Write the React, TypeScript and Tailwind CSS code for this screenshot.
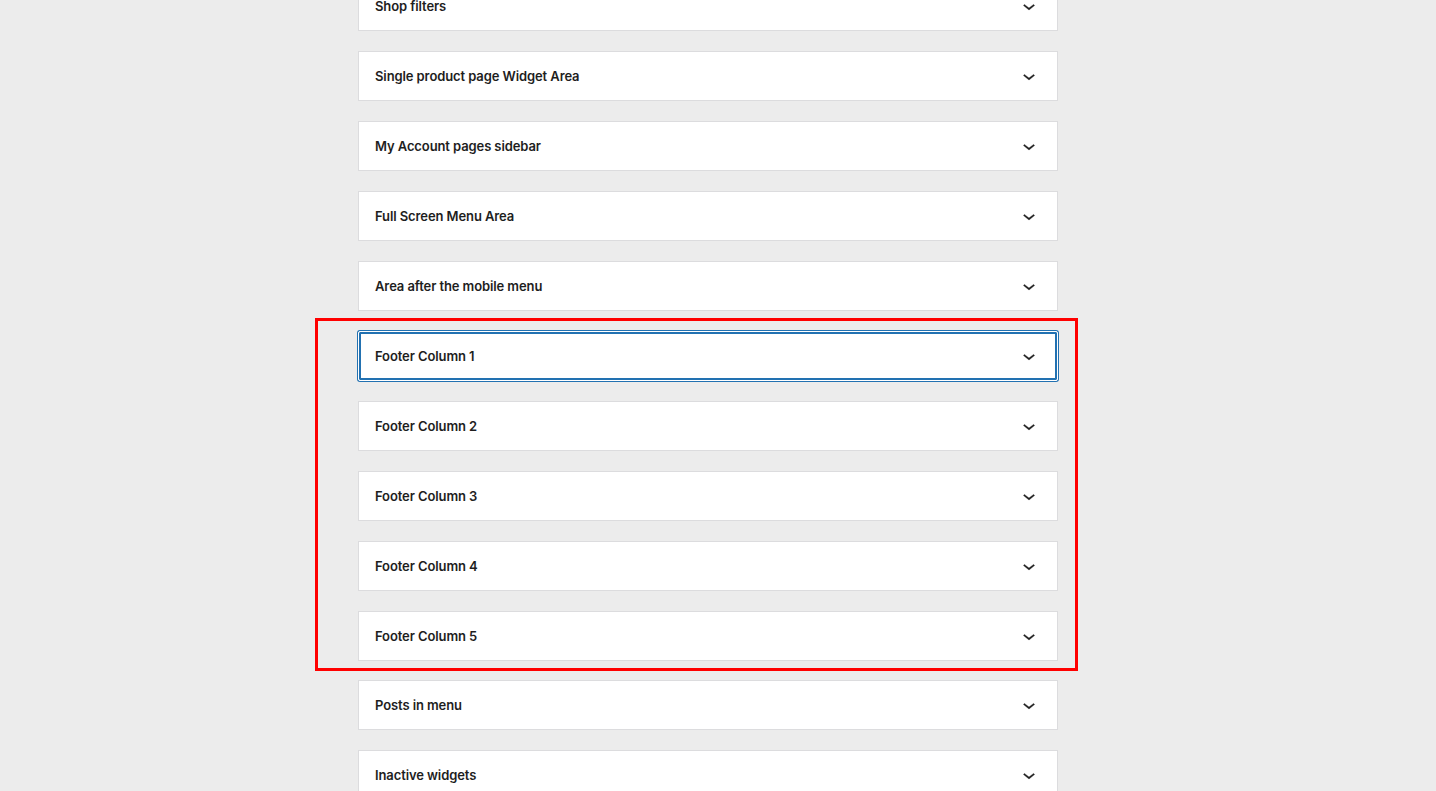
import React from "react";

const Chevron = () => (
  <svg width="24" height="24" viewBox="0 0 24 24" className="shrink-0 fill-[#1e1e1e] stroke-[#1e1e1e]" strokeWidth={0.35}>
    <path d="M17.5 11.6L12 16l-5.5-4.4.9-1.2L12 14l4.6-3.6 1 1.2z" />
  </svg>
);

const Item = ({ label, focused = false, className = "" }: { label: string; focused?: boolean; className?: string }) => (
  <div
    className={
      "h-[50px] w-[700px] flex items-center justify-between pl-4 pr-4 bg-white border " +
      (focused
        ? "border-white rounded-[2px] shadow-[0_0_0_1px_#2271b1,inset_0_0_0_2px_#2271b1] "
        : "border-[#dcdcde] ") +
      className
    }
  >
    <span className="text-[13px] font-semibold text-[#1e1e1e] leading-none tracking-[-0.1px]">{label}</span>
    <Chevron />
  </div>
);

export default function App() {
  const top = [
    "Single product page Widget Area",
    "My Account pages sidebar",
    "Full Screen Menu Area",
    "Area after the mobile menu",
  ];
  const footer = ["Footer Column 1", "Footer Column 2", "Footer Column 3", "Footer Column 4", "Footer Column 5"];
  return (
    <div
      className="w-[1436px] h-[791px] overflow-hidden bg-[#ececec]"
      style={{ fontFamily: 'Inter, "Noto Sans", "Liberation Sans", sans-serif' }}
    >
      <div className="ml-[358px] mt-[-19px] w-[700px] flex flex-col gap-5">
        <Item label="Shop filters" />
        {top.map((t) => (
          <Item key={t} label={t} />
        ))}
        <div className="relative w-[700px] flex flex-col gap-5">
          <div className="pointer-events-none absolute left-[-43px] top-[-13px] right-[-20px] bottom-[-10px] border-[3px] border-[#ff0000]" />
          {footer.map((t, i) => (
            <Item key={t} label={t} focused={i === 0} />
          ))}
        </div>
        <Item label="Posts in menu" className="mt-[-1px]" />
        <Item label="Inactive widgets" />
      </div>
    </div>
  );
}
